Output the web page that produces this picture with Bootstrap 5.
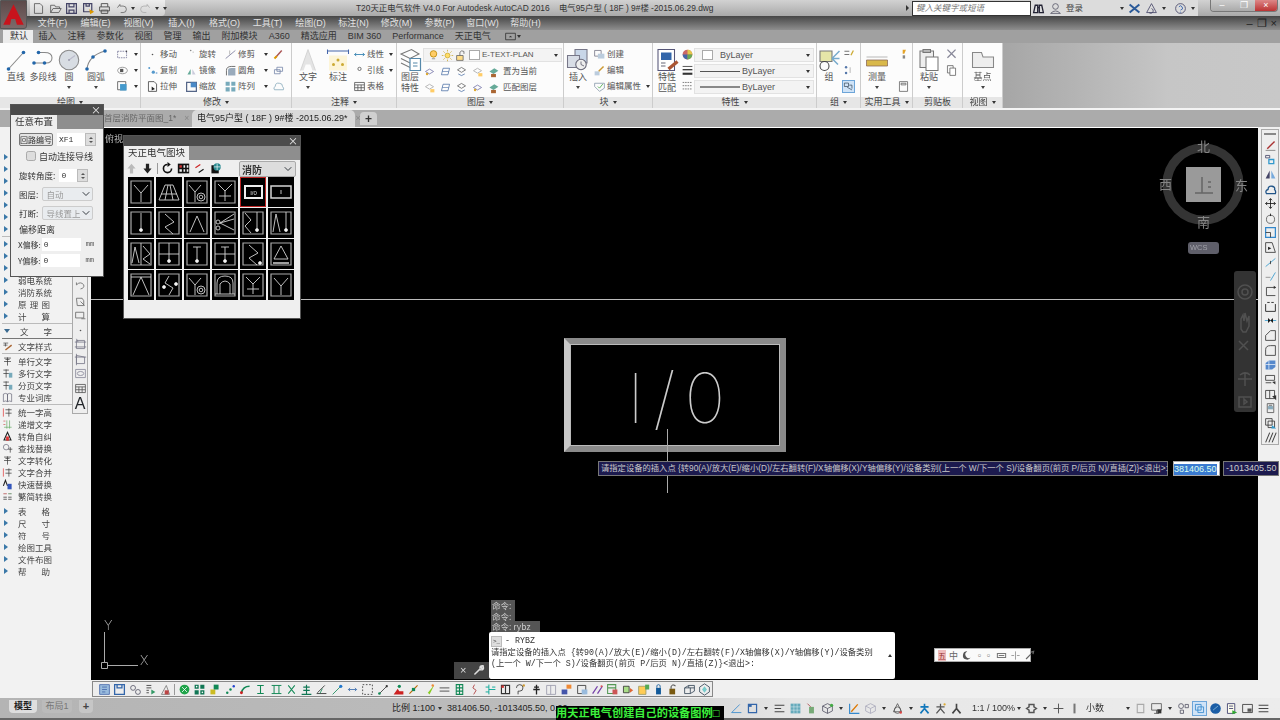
<!DOCTYPE html>
<html lang="zh-CN">
<head>
<meta charset="UTF-8" />
<title>T20天正电气软件 V4.0</title>
<link href="https://cdn.jsdelivr.net/npm/bootstrap@5.3.2/dist/css/bootstrap.min.css" rel="stylesheet"/>
<style>
  html,body{margin:0;height:720px;width:1280px;overflow:hidden}
  body{position:relative;background:#f0f0f0;font-family:"Liberation Sans","Noto Sans CJK SC",sans-serif;font-size:9px;line-height:1;color:#444}
  #app{position:relative;width:1280px;height:720px;filter:blur(.35px);overflow:hidden}
  svg.ic{width:13px;height:13px;flex:none;fill:none;stroke-width:1}
  svg.lg{width:24px;height:24px;flex:none;fill:none;stroke-width:.7}
  .caret-dn{width:0;height:0;border-left:2.5px solid transparent;border-right:2.5px solid transparent;border-top:3px solid #333;flex:none;display:inline-block}

  .title-row{height:16px;background:linear-gradient(#d2d2d2,#a9a9a9)}
  .qat{margin-left:30px;width:135px;height:16px;background:linear-gradient(#eee,#cfcfcf);border-radius:0 0 4px 0;padding-left:2px;gap:3.5px;flex:none}
  .title-txt{margin-left:191px;width:360px;font-size:8.4px;color:#333;white-space:pre;flex:none}
  .tri-r{margin-left:190px;width:0;height:0;flex:none;border-top:3px solid transparent;border-bottom:3px solid transparent;border-left:3px solid #333}
  .search-box{margin-left:3px;width:119px;height:15px;background:#fff;border:1px solid #333;font-style:italic;color:#777;padding-left:3px;font-size:8.5px;flex:none}
  .info-box{width:167px;height:16px;background:#dcdcdc;padding-left:1px;gap:4px;flex:none}
  .login-txt{width:50px;font-size:8.5px}
  .ms-help{margin-left:4px}
  .win-btns{margin-left:12px;height:12px;align-self:flex-start;width:68px;border-radius:0 0 4px 4px;overflow:hidden;border:1px solid #777;border-top:0;flex:none}
  .win-btn{flex:1;background:linear-gradient(#ccc,#aaa);color:#fff;font-size:9px}
  .win-close{background:linear-gradient(#d88,#b33)}

  .menu-row{height:14px;background:linear-gradient(#464646,#8e8e8e);padding-left:27px;color:#e2e2e2}
  .menu-item{width:43px;text-align:center;padding-left:8px;white-space:nowrap}
  .mdi-ctl{margin-left:auto;padding-right:3px;gap:4px;color:#222;font-size:11px}

  .tab-row{height:13px;background:#a0a0a0;padding-left:3px;color:#333}
  .rtab{padding:0 5.5px;height:13px;white-space:nowrap}
  .rtab-on{background:#ececec;padding:0 5px 0 7px}

  .ribbon{height:67px;background:#fff;border-bottom:2px solid #f4f4f4}
  .rp{border-right:1px solid #ccc;background:#fcfcfc}
  .rp-body{height:54px;padding-top:5px}
  .rp-foot{height:11px;background:#e6e6e6;color:#444;gap:4px}
  .w-draw{width:141px}.w-mod{width:151px}.w-ann{width:105px}.w-lay{width:167px}.w-blk{width:89px}.w-pro{width:164px}.w-grp{width:44px}.w-utl{width:52px}.w-clp{width:50px}.w-viw{width:40px}
  .rp-rest{flex:1;background:linear-gradient(90deg,#a6a6a6,#c6c6c6 60%,#c8c8c8)}
  .big{width:26px;height:49px;flex:none;text-align:center;color:#555}
  .big .lbl{white-space:nowrap;line-height:11px}
  .big .caret-dn{margin-top:3px;border-top-color:#444}
  .b24{width:24px}.b28{width:28px}.b30{width:30px}.b32{width:32px}
  .col3{gap:3px}
  .sm{height:13px;gap:1px;white-space:nowrap;color:#555;font-size:8.5px}
  .sm-lay{gap:3px}
  .pad-a{padding-left:5px}.pad-b{padding-left:8px}.pad-c{padding-left:4px}.pad-e{padding-left:1px}.pad-f{padding-left:3px}
  .combo{width:139px;height:14px;background:#f3f3f3;border:1px solid #e2e2e2;font-size:9px;padding:0 3px;gap:1px;color:#555}
  .combo-lay{font-size:8px}
  .combo-w{width:120px;padding-left:5px;margin-bottom:2px}
  .swatch{width:11px;height:10px;background:#fff;border:1px solid #aaa;margin:0 6px 0 2px;flex:none}
  .swatch-lay{margin:0 1px 0 0}
  .sw-line{width:40px;border-top:1px solid #555;margin-right:1px}
  .sw-thick{border-top-width:2px;border-top-color:#888}
  .on-blue{background:#cfe3f7;border:1px solid #6da5d8}

  .doc-row{height:17px;background:#ababab;color:#444;padding-left:104px}
  .dtab{height:17px;white-space:nowrap;font-size:9px}
  .dtab-1{width:88px;font-size:8.5px;color:#666}
  .dtab-on{width:163px;background:#d9d9d9;border-radius:5px 5px 0 0;padding-left:5px;color:#222}
  .dtab-x{color:#888;margin-left:8px}
  .dtab-plus{width:17px;height:13px;margin-left:5px;background:#d0d0d0;border-radius:4px 4px 0 0;color:#333;font-weight:700;font-size:12px}

  .main-row{height:571px}
  .side{width:91px;background:#f2f2f2}
  .side-list{width:72px;padding-top:24px;font-family:"Noto Sans CJK SC",sans-serif}
  .li-row{height:12px;padding-left:4px;gap:5px;color:#444;white-space:nowrap}
  .li-tri{width:0;height:0;flex:none;border-top:3.5px solid transparent;border-bottom:3.5px solid transparent;border-left:4px solid #3a78a8}
  .li-tri-dn{border-left:3.5px solid transparent;border-right:3.5px solid transparent;border-top:4px solid #3a6a90;border-bottom:0}
  .li-txt{width:32px;margin-left:5px;justify-content:space-between;font-size:8.5px}
  .li-icon{gap:0;padding-left:2px}
  .li-icon .ic{width:11px;height:11px}
  .li-sep{border-top:1px solid #bbb;margin:1px 0 1px 2px}
  .li-sep-dark{border-top:1px solid #777}
  .mt-gap{margin-top:1px}
  .mb-gap{margin-bottom:3px}
  .vbar{width:16px;height:287px;background:#eee;border:1px solid #aaa;border-top:0;gap:1.5px;padding-bottom:1px;color:#333}
  .center-col{width:1167px}
  .cad{height:553px;background:#000;border-top:1px solid #fff}
  .tb-row{height:18px;padding:1px 0 0 1px}
  .tb-bottom{width:621px;height:16px;background:#ededed;border:1px solid #888;padding-left:5px;gap:2.3px}
  .tb-bottom .ic{width:13px;height:13px}
  .right-strip{width:22px;padding:2px 1px 0 3px}
  .rbar{width:18px;height:316px;background:#eee;border:1px solid #aaa;gap:1.65px;padding-top:3px}
  .grip-h{width:12px;height:3px;border-top:1px solid #888;border-bottom:1px solid #888;margin-bottom:2px}

  .status{height:22px;background:linear-gradient(90deg,#b4b4b4,#bcbcbc 40%,#e6e6e6 62%,#ececec);border-bottom:2px solid #666;position:relative}
  .mtab{height:13px;align-self:flex-start;border-radius:0 0 4px 4px;margin-top:2px;white-space:nowrap;justify-content:center}
  .mtab-a{margin-left:9px;width:28px;font-weight:700;color:#222;background:#dedede}
  .mtab-b{margin-left:5px;width:30px;color:#777;background:#bbb}
  .mtab-c{margin-left:7px;width:14px;font-weight:700;font-size:11px;background:#c6c6c6}
  .st-scale{margin-left:299px;width:55px;gap:3px;color:#222}
  .st-coord{color:#222;width:283px;white-space:nowrap}
  .st-icons{gap:3px}
  .st-icons .caret-dn{margin:0 2px}
  .st-zoom{color:#333;white-space:nowrap;margin:0 2px 0 9px}
  .ms-s{margin-left:4px}
  .st-dec{width:40px;margin-left:5px;color:#333}
  .st-hl{background:#cfe3f7;outline:1px solid #6da5d8}

  /* over the drawing area and the page */
  .float{position:absolute}
  .pal{background:#efefef;border:1px solid #555;color:#333;font-family:"Noto Sans CJK SC",sans-serif}
  .pal-1{left:10px;top:104px;width:94px;height:173px}
  .pal-2{left:123px;top:135px;width:178px;height:184px}
  .pal-top{height:10px;background:#4c4c4c;color:#eee;font-size:10px;padding-right:2px}
  .pal-tabs{height:14px;background:#8e8e8e}
  .pal-tab{height:14px;background:#eee;padding:0 4px;font-size:9.5px;color:#333}
  .pal-1 .pal-body{padding:4px 0 0 8px}
  .p-btn{width:34px;height:13px;padding:0;font-size:8px;border:1px solid #777;background:#e4e4e4;color:#333;border-radius:2px;line-height:11px;white-space:nowrap}
  .p-inp{height:13px;padding:0 2px;font-size:8px;border:0;border-radius:0;background:#fff;color:#333;font-family:"Liberation Mono",monospace;min-height:0}
  .p-spin{width:11px;height:13px;background:#ddd;border:1px solid #bbb;gap:2px}
  .p-up{width:0;height:0;border-left:2px solid transparent;border-right:2px solid transparent;border-bottom:2.5px solid #555}
  .p-dn{width:0;height:0;border-left:2px solid transparent;border-right:2px solid transparent;border-top:2.5px solid #555}
  .w-28{width:28px}.w-18{width:18px}.w-39{width:39px}
  .p-row{gap:4px;font-size:8.5px;white-space:nowrap}
  .p-row-cb{margin:5px 0 8px 7px;gap:3px;font-size:9px}
  .p-cb{width:10px;height:10px;margin:0;border-radius:0;background-color:#ddd;border-color:#aaa}
  .p-sel{width:51px;height:14px;min-height:0;padding:0 3px;font-size:8.5px;color:#999;background-color:#e6e6e6;background-size:8px 8px;background-position:right 2px center;border:1px solid #ccc;border-radius:2px}
  .p-sp{margin-bottom:5px}
  .p-off{margin-top:4px;font-size:9px;margin-bottom:4px}
  .p-xy{gap:1px;font-size:8px;margin-bottom:3px;margin-left:-1px;white-space:nowrap}
  .p-mm{margin-left:4px;font-family:"Liberation Mono",monospace;font-size:7px;color:#555}
  .p-bar{height:17px;padding:0 4px 0 1px;gap:3px}
  .p-bar-sep{width:1px;height:11px;background:#999}
  .p-sel2{margin-left:auto;flex:none;width:57px;height:16px;min-height:0;padding:0 2px;font-size:10px;font-weight:700;color:#333;background-color:#ddd;background-size:8px 8px;background-position:right 3px center;border:1px solid #aaa;border-radius:2px;font-family:"Noto Sans CJK SC",sans-serif}
  .grid-blocks{display:grid;grid-template-columns:repeat(6,26px);column-gap:2px;row-gap:1px;padding-left:4px}
  .blk{width:26px;height:30px;background:#000;display:block}
  .blk svg{display:block;width:26px;height:30px;fill:none;stroke:#d4d4d4;stroke-width:.9}
  .blk-on{outline:1.5px solid #b22;outline-offset:-1px}

  .cad-rule-h{left:91px;top:299px;width:1167px;height:1px;background:#bbb}
  .cad-rule-v{left:667px;top:429px;width:1px;height:64px;background:#aaa}
  .vp-txt{left:105px;top:134px;color:#bbb;white-space:nowrap;font-family:"Noto Sans CJK SC",sans-serif}
  .io-block{left:564px;top:338px;width:222px;height:114px;border:6px solid #8a8a8a;border-left-color:#c8c8c8;background:#000;box-shadow:inset 0 0 0 1px #bbb}
  .io-txt{left:627px;top:358px;font-family:Inter,"Liberation Sans",sans-serif;font-weight:100;font-size:69px;line-height:80px;color:#ccc;letter-spacing:9px;white-space:nowrap}

  .tip{left:598px;top:461px;width:570px;height:15px;background:#1c1a4e;border:1px solid #777;color:#c8c8c8;font-size:8.3px;line-height:13px;padding-left:2px;white-space:nowrap}
  .tip-a{left:1173px;top:461px;width:47px;height:15px;background:#fff;border:1px solid #aaa;padding:2px 0 0 0}
  .tip-a span{background:#3a7ad0;color:#dfe;display:inline-block;font-size:9px;line-height:11px}
  .tip-b{left:1223px;top:461px;width:56px;height:15px;background:#1c1a4e;border:1px solid #777;color:#ccc;font-size:9px;line-height:13px;padding-left:2px;white-space:nowrap}

  .cube-ring{left:1162px;top:143px}
  .cube-face{left:1186px;top:167px;width:35px;height:35px;background:#9a9a9a}
  .cube-lbl{color:#858585;font-size:13px;font-family:"Noto Sans CJK SC",sans-serif}
  .l-n{left:1197px;top:139px}.l-s{left:1197px;top:215px}.l-w{left:1159px;top:177px}.l-e{left:1235px;top:178px}
  .wcs{left:1188px;top:242px;width:31px;height:12px;background:#5f5f6a;border-radius:3px;color:#a0a0a8;font-size:7.5px;padding-left:2px;line-height:12px}
  .navb{left:1234px;top:271px;width:22px;height:141px;background:#333;border-radius:3px}

  .ucs{left:100px;top:627px}
  .ucs-lbl{font-family:Inter,"Liberation Sans",sans-serif;font-weight:200;font-size:13px;color:#bbb}
  .ucs-y{left:104px;top:619px}
  .ucs-x{left:140px;top:654px}

  .hist{left:491px;height:11px;background:#555;color:#ccc;font-size:8.5px;line-height:11px;padding:0 1px;white-space:nowrap;font-family:"Noto Sans CJK SC",sans-serif}
  .hist-1{top:600px;width:24px}.hist-2{top:611px;width:24px}.hist-3{top:621px;width:49px}
  .cmd{left:489px;top:632px;width:406px;height:47px;background:#fff;border-radius:2px;color:#333;font-family:"Liberation Mono","Noto Sans CJK SC",monospace;font-size:8.3px;padding:3px 2px;white-space:nowrap}
  .cmd-1{gap:3px;height:13px}
  .cmd-ic{width:11px;height:11px;background:#ddd;border:1px solid #bbb;font-size:6px;line-height:9px;color:#333}
  .cmd-l{line-height:10.500px}
  .cmd-tri{left:888px;top:654px;width:0;height:0;border-left:2.5px solid transparent;border-right:2.5px solid transparent;border-bottom:3px solid #333}
  .cmd-grip{left:454px;top:662px;width:35px;height:17px;background:#444;color:#ddd;font-size:11px;padding-left:6px;gap:6px}
  .ime{left:934px;top:648px;width:97px;height:14px;background:#fafafa;border:1px solid #aaa;gap:3px;padding-left:3px;color:#666;font-size:9px;font-family:"Noto Sans CJK SC",sans-serif}
  .ime svg.ic{width:11px;height:11px}
  .ime-a{width:11px;height:11px;background:#eebbbb;color:#933;font-size:8px;line-height:11px;text-align:center}

  .subt{left:556px;top:706px;width:168px;height:14px;background:#000;color:#3cf03c;font-family:"Liberation Serif","Noto Sans CJK SC",serif;font-size:11.2px;font-weight:700;line-height:14px;white-space:nowrap}
  .app-btn{left:0;top:0;width:27px;height:29px;background:linear-gradient(#5c4a4a,#7c6a6a);border:1px solid #555;border-radius:0 0 3px 0}
</style>
</head>
<body>
<div id="app" class="d-flex flex-column">

  <div class="title-row d-flex align-items-center">
    <div class="qat d-flex align-items-center">
      <svg class="ic" data-i="doc"></svg><svg class="ic" data-i="open"></svg><svg class="ic" data-i="save"></svg><svg class="ic" data-i="saveas"></svg><svg class="ic" data-i="print"></svg><svg class="ic" data-i="undo"></svg><span class="caret-dn"></span><svg class="ic" data-i="redo"></svg><span class="caret-dn"></span><span class="caret-dn"></span>
    </div>
    <div class="title-txt">T20天正电气软件 V4.0 For Autodesk AutoCAD 2016    电气95户型 ( 18F ) 9#楼 -2015.06.29.dwg</div>
    <div class="tri-r"></div>
    <div class="search-box d-flex align-items-center">键入关键字或短语</div>
    <div class="info-box d-flex align-items-center">
      <svg class="ic" data-i="bino"></svg><svg class="ic" data-i="user"></svg>
      <span class="login-txt">登录</span><span class="caret-dn"></span>
      <svg class="ic" data-i="xchg"></svg><svg class="ic" data-i="a360"></svg><span class="caret-dn"></span>
      <svg class="ic ms-help" data-i="help"></svg><span class="caret-dn"></span>
    </div>
    <div class="win-btns d-flex">
      <div class="win-btn d-flex align-items-center justify-content-center">–</div>
      <div class="win-btn d-flex align-items-center justify-content-center">❐</div>
      <div class="win-btn win-close d-flex align-items-center justify-content-center">×</div>
    </div>
  </div>

  <div class="menu-row d-flex align-items-center">
    <div class="menu-item">文件(F)</div><div class="menu-item">编辑(E)</div><div class="menu-item">视图(V)</div><div class="menu-item">插入(I)</div><div class="menu-item">格式(O)</div><div class="menu-item">工具(T)</div><div class="menu-item">绘图(D)</div><div class="menu-item">标注(N)</div><div class="menu-item">修改(M)</div><div class="menu-item">参数(P)</div><div class="menu-item">窗口(W)</div><div class="menu-item">帮助(H)</div>
    <div class="mdi-ctl d-flex align-items-center"><span>–</span><span>❐</span><span>×</span></div>
  </div>

  <div class="tab-row d-flex align-items-center">
    <div class="rtab rtab-on d-flex align-items-center">默认</div><div class="rtab d-flex align-items-center">插入</div><div class="rtab d-flex align-items-center">注释</div><div class="rtab d-flex align-items-center">参数化</div><div class="rtab d-flex align-items-center">视图</div><div class="rtab d-flex align-items-center">管理</div><div class="rtab d-flex align-items-center">输出</div><div class="rtab d-flex align-items-center">附加模块</div><div class="rtab d-flex align-items-center">A360</div><div class="rtab d-flex align-items-center">精选应用</div><div class="rtab d-flex align-items-center">BIM 360</div><div class="rtab d-flex align-items-center">Performance</div><div class="rtab d-flex align-items-center">天正电气</div>
    <svg class="ic ms-2" data-i="mini"></svg><span class="caret-dn"></span>
  </div>

  <div class="ribbon d-flex">
    <div class="rp w-draw">
      <div class="rp-body d-flex pad-f">
        <div class="big d-flex flex-column align-items-center"><svg class="lg" data-i="line"></svg><span class="lbl">直线</span></div>
        <div class="big b28 d-flex flex-column align-items-center"><svg class="lg" data-i="pline"></svg><span class="lbl">多段线</span></div>
        <div class="big b24 d-flex flex-column align-items-center"><svg class="lg" data-i="circ"></svg><span class="lbl">圆</span><span class="caret-dn"></span></div>
        <div class="big b30 d-flex flex-column align-items-center"><svg class="lg" data-i="arc"></svg><span class="lbl">圆弧</span><span class="caret-dn"></span></div>
        <div class="col3 d-flex flex-column pad-a">
          <div class="sm d-flex align-items-center"><svg class="ic" data-i="drect"></svg><span class="caret-dn ms-1"></span></div>
          <div class="sm d-flex align-items-center"><svg class="ic" data-i="hatch"></svg><span class="caret-dn ms-1"></span></div>
          <div class="sm d-flex align-items-center"><svg class="ic" data-i="region"></svg><span class="caret-dn ms-1"></span></div>
        </div>
      </div>
      <div class="rp-foot d-flex align-items-center justify-content-center">绘图<span class="caret-dn"></span></div>
    </div>
    <div class="rp w-mod">
      <div class="rp-body d-flex pad-a">
        <div class="col3 d-flex flex-column">
          <div class="sm d-flex align-items-center"><svg class="ic" data-i="move"></svg>移动</div>
          <div class="sm d-flex align-items-center"><svg class="ic" data-i="copy"></svg>复制</div>
          <div class="sm d-flex align-items-center"><svg class="ic" data-i="stretch"></svg>拉伸</div>
        </div>
        <div class="col3 d-flex flex-column pad-b">
          <div class="sm d-flex align-items-center"><svg class="ic" data-i="rotate"></svg>旋转</div>
          <div class="sm d-flex align-items-center"><svg class="ic" data-i="mirror"></svg>镜像</div>
          <div class="sm d-flex align-items-center"><svg class="ic" data-i="scale"></svg>缩放</div>
        </div>
        <div class="col3 d-flex flex-column pad-b">
          <div class="sm d-flex align-items-center"><svg class="ic" data-i="trim"></svg>修剪<span class="caret-dn ms-2"></span></div>
          <div class="sm d-flex align-items-center"><svg class="ic" data-i="fillet"></svg>圆角<span class="caret-dn ms-2"></span></div>
          <div class="sm d-flex align-items-center"><svg class="ic" data-i="array"></svg>阵列<span class="caret-dn ms-2"></span></div>
        </div>
        <div class="col3 d-flex flex-column pad-c">
          <div class="sm d-flex align-items-center"><svg class="ic" data-i="brush"></svg></div>
          <div class="sm d-flex align-items-center"><svg class="ic" data-i="chain"></svg></div>
          <div class="sm d-flex align-items-center"><svg class="ic" data-i="cloud"></svg></div>
        </div>
      </div>
      <div class="rp-foot d-flex align-items-center justify-content-center">修改<span class="caret-dn"></span></div>
    </div>
    <div class="rp w-ann">
      <div class="rp-body d-flex">
        <div class="big b32 d-flex flex-column align-items-center"><svg class="lg" data-i="atext"></svg><span class="lbl">文字</span><span class="caret-dn"></span></div>
        <div class="big b28 d-flex flex-column align-items-center"><svg class="lg" data-i="dim"></svg><span class="lbl">标注</span></div>
        <div class="col3 d-flex flex-column pad-e">
          <div class="sm d-flex align-items-center"><svg class="ic" data-i="lin"></svg>线性<span class="caret-dn ms-1"></span></div>
          <div class="sm d-flex align-items-center"><svg class="ic" data-i="lead"></svg>引线<span class="caret-dn ms-1"></span></div>
          <div class="sm d-flex align-items-center"><svg class="ic" data-i="table"></svg>表格</div>
        </div>
      </div>
      <div class="rp-foot d-flex align-items-center justify-content-center">注释<span class="caret-dn"></span></div>
    </div>
    <div class="rp w-lay">
      <div class="rp-body d-flex">
        <div class="big d-flex flex-column align-items-center"><svg class="lg" data-i="layers"></svg><span class="lbl">图层<br>特性</span></div>
        <div class="d-flex flex-column col3">
          <div class="combo combo-lay d-flex align-items-center"><svg class="ic" data-i="bulb"></svg><svg class="ic" data-i="sun"></svg><svg class="ic" data-i="lock"></svg><span class="swatch swatch-lay"></span>E-TEXT-PLAN<span class="caret-dn ms-auto"></span></div>
          <div class="sm sm-lay d-flex align-items-center"><svg class="ic" data-i="ly1"></svg><svg class="ic" data-i="ly2"></svg><svg class="ic" data-i="ly3"></svg><svg class="ic" data-i="ly4"></svg><svg class="ic" data-i="ly5"></svg>置为当前</div>
          <div class="sm sm-lay d-flex align-items-center"><svg class="ic" data-i="ly4"></svg><svg class="ic" data-i="ly2"></svg><svg class="ic" data-i="ly3"></svg><svg class="ic" data-i="ly1"></svg><svg class="ic" data-i="ly5"></svg>匹配图层</div>
        </div>
      </div>
      <div class="rp-foot d-flex align-items-center justify-content-center">图层<span class="caret-dn"></span></div>
    </div>
    <div class="rp w-blk">
      <div class="rp-body d-flex">
        <div class="big b28 d-flex flex-column align-items-center"><svg class="lg" data-i="insert"></svg><span class="lbl">插入</span><span class="caret-dn"></span></div>
        <div class="col3 d-flex flex-column pad-e">
          <div class="sm d-flex align-items-center"><svg class="ic" data-i="bcreate"></svg>创建</div>
          <div class="sm d-flex align-items-center"><svg class="ic" data-i="bedit"></svg>编辑</div>
          <div class="sm d-flex align-items-center"><svg class="ic" data-i="battr"></svg>编辑属性<span class="caret-dn ms-1"></span></div>
        </div>
      </div>
      <div class="rp-foot d-flex align-items-center justify-content-center">块<span class="caret-dn"></span></div>
    </div>
    <div class="rp w-pro">
      <div class="rp-body d-flex">
        <div class="big b28 d-flex flex-column align-items-center"><svg class="lg" data-i="match"></svg><span class="lbl">特性<br>匹配</span></div>
        <div class="col3 d-flex flex-column">
          <div class="sm d-flex align-items-center"><svg class="ic" data-i="wheel"></svg></div>
          <div class="sm d-flex align-items-center"><svg class="ic" data-i="lw"></svg></div>
          <div class="sm d-flex align-items-center"><svg class="ic" data-i="ltype"></svg></div>
        </div>
        <div class="d-flex flex-column">
          <div class="combo combo-w d-flex align-items-center"><span class="swatch"></span>ByLayer<span class="caret-dn ms-auto"></span></div>
          <div class="combo combo-w d-flex align-items-center"><span class="sw-line"></span>ByLayer<span class="caret-dn ms-auto"></span></div>
          <div class="combo combo-w d-flex align-items-center"><span class="sw-line sw-thick"></span>ByLayer<span class="caret-dn ms-auto"></span></div>
        </div>
      </div>
      <div class="rp-foot d-flex align-items-center justify-content-center">特性<span class="caret-dn"></span></div>
    </div>
    <div class="rp w-grp">
      <div class="rp-body d-flex">
        <div class="big b24 d-flex flex-column align-items-center"><svg class="lg" data-i="group"></svg><span class="lbl">组</span></div>
        <div class="col3 d-flex flex-column pad-e">
          <div class="sm d-flex align-items-center"><svg class="ic" data-i="g1"></svg></div>
          <div class="sm d-flex align-items-center"><svg class="ic" data-i="g2"></svg></div>
          <div class="sm d-flex align-items-center"><svg class="ic on-blue" data-i="g3"></svg></div>
        </div>
      </div>
      <div class="rp-foot d-flex align-items-center justify-content-center">组<span class="caret-dn"></span></div>
    </div>
    <div class="rp w-utl">
      <div class="rp-body d-flex">
        <div class="big b32 d-flex flex-column align-items-center"><svg class="lg" data-i="ruler"></svg><span class="lbl">测量</span><span class="caret-dn"></span></div>
        <div class="col3 d-flex flex-column pad-c">
          <div class="sm d-flex align-items-center"><svg class="ic" data-i="u1"></svg></div>
          <div class="sm d-flex align-items-center"></div>
          <div class="sm d-flex align-items-center"><svg class="ic" data-i="calc"></svg></div>
        </div>
      </div>
      <div class="rp-foot d-flex align-items-center justify-content-center">实用工具<span class="caret-dn"></span></div>
    </div>
    <div class="rp w-clp">
      <div class="rp-body d-flex">
        <div class="big b32 d-flex flex-column align-items-center"><svg class="lg" data-i="paste"></svg><span class="lbl">粘贴</span><span class="caret-dn"></span></div>
        <div class="col3 d-flex flex-column">
          <div class="sm d-flex align-items-center"><svg class="ic" data-i="cut"></svg></div>
          <div class="sm d-flex align-items-center"><svg class="ic" data-i="cpy"></svg></div>
        </div>
      </div>
      <div class="rp-foot d-flex align-items-center justify-content-center">剪贴板</div>
    </div>
    <div class="rp w-viw">
      <div class="rp-body d-flex justify-content-center">
        <div class="big d-flex flex-column align-items-center"><svg class="lg" data-i="base"></svg><span class="lbl">基点</span><span class="caret-dn"></span></div>
      </div>
      <div class="rp-foot d-flex align-items-center justify-content-center">视图<span class="caret-dn"></span></div>
    </div>
    <div class="rp-rest"></div>
  </div>

  <div class="doc-row d-flex align-items-center">
    <div class="dtab dtab-1 d-flex align-items-center">首层消防平面图_1*<span class="dtab-x">×</span></div>
    <div class="dtab dtab-on d-flex align-items-center">电气95户型 ( 18F ) 9#楼 -2015.06.29*<span class="dtab-x">×</span></div>
    <div class="dtab-plus d-flex align-items-center justify-content-center">+</div>
  </div>

  <div class="main-row d-flex">
    <div class="side d-flex">
      <div class="side-list">
        <div class="li-row d-flex align-items-center"><span class="li-tri"></span></div>
        <div class="li-row d-flex align-items-center"><span class="li-tri"></span></div>
        <div class="li-row d-flex align-items-center"><span class="li-tri"></span></div>
        <div class="li-row d-flex align-items-center"><span class="li-tri"></span></div>
        <div class="li-row d-flex align-items-center"><span class="li-tri"></span></div>
        <div class="li-row d-flex align-items-center"><span class="li-tri"></span></div>
        <div class="li-row d-flex align-items-center"><span class="li-tri"></span></div>
        <div class="li-sep"></div>
        <div class="li-row d-flex align-items-center"><span class="li-tri"></span></div>
        <div class="li-row d-flex align-items-center"><span class="li-tri"></span></div>
        <div class="li-row d-flex align-items-center"><span class="li-tri"></span></div>
        <div class="li-row d-flex align-items-center"><span class="li-tri"></span><span class="li-txt d-flex">弱电系统</span></div>
        <div class="li-row d-flex align-items-center"><span class="li-tri"></span><span class="li-txt d-flex">消防系统</span></div>
        <div class="li-row d-flex align-items-center"><span class="li-tri"></span><span class="li-txt d-flex"><span>原</span><span>理</span><span>图</span></span></div>
        <div class="li-row d-flex align-items-center"><span class="li-tri"></span><span class="li-txt d-flex"><span>计</span><span>算</span></span></div>
        <div class="li-sep"></div>
        <div class="li-row d-flex align-items-center"><span class="li-tri li-tri-dn"></span><span class="li-txt d-flex"><span>文</span><span>字</span></span></div>
        <div class="li-sep li-sep-dark"></div>
        <div class="li-row li-icon d-flex align-items-center mt-gap"><svg class="ic" data-i="s1"></svg><span class="li-txt d-flex">文字样式</span></div>
        <div class="li-sep"></div>
        <div class="li-row li-icon d-flex align-items-center mt-gap"><svg class="ic" data-i="s2"></svg><span class="li-txt d-flex">单行文字</span></div>
        <div class="li-row li-icon d-flex align-items-center"><svg class="ic" data-i="s3"></svg><span class="li-txt d-flex">多行文字</span></div>
        <div class="li-row li-icon d-flex align-items-center"><svg class="ic" data-i="s3"></svg><span class="li-txt d-flex">分页文字</span></div>
        <div class="li-row li-icon d-flex align-items-center"><svg class="ic" data-i="s4"></svg><span class="li-txt d-flex">专业词库</span></div>
        <div class="li-sep"></div>
        <div class="li-row li-icon d-flex align-items-center"><svg class="ic" data-i="s5"></svg><span class="li-txt d-flex">统一字高</span></div>
        <div class="li-row li-icon d-flex align-items-center"><svg class="ic" data-i="s6"></svg><span class="li-txt d-flex">递增文字</span></div>
        <div class="li-row li-icon d-flex align-items-center"><svg class="ic" data-i="s7"></svg><span class="li-txt d-flex">转角自纠</span></div>
        <div class="li-row li-icon d-flex align-items-center"><svg class="ic" data-i="s8"></svg><span class="li-txt d-flex">查找替换</span></div>
        <div class="li-row li-icon d-flex align-items-center"><svg class="ic" data-i="s2"></svg><span class="li-txt d-flex">文字转化</span></div>
        <div class="li-row li-icon d-flex align-items-center"><svg class="ic" data-i="s5"></svg><span class="li-txt d-flex">文字合并</span></div>
        <div class="li-row li-icon d-flex align-items-center"><svg class="ic" data-i="s9"></svg><span class="li-txt d-flex">快速替换</span></div>
        <div class="li-row li-icon d-flex align-items-center mb-gap"><svg class="ic" data-i="s10"></svg><span class="li-txt d-flex">繁简转换</span></div>
        <div class="li-row d-flex align-items-center"><span class="li-tri"></span><span class="li-txt d-flex"><span>表</span><span>格</span></span></div>
        <div class="li-row d-flex align-items-center"><span class="li-tri"></span><span class="li-txt d-flex"><span>尺</span><span>寸</span></span></div>
        <div class="li-row d-flex align-items-center"><span class="li-tri"></span><span class="li-txt d-flex"><span>符</span><span>号</span></span></div>
        <div class="li-row d-flex align-items-center"><span class="li-tri"></span><span class="li-txt d-flex">绘图工具</span></div>
        <div class="li-row d-flex align-items-center"><span class="li-tri"></span><span class="li-txt d-flex">文件布图</span></div>
        <div class="li-row d-flex align-items-center"><span class="li-tri"></span><span class="li-txt d-flex"><span>帮</span><span>助</span></span></div>
      </div>
      <div class="vbar d-flex flex-column align-items-center justify-content-end">
        <svg class="ic" data-i="v1"></svg><svg class="ic" data-i="v2"></svg><svg class="ic" data-i="v3"></svg><svg class="ic" data-i="v4"></svg><svg class="ic" data-i="v5"></svg><svg class="ic" data-i="v6"></svg><svg class="ic" data-i="v7"></svg><svg class="ic" data-i="table"></svg>
        <span class="fs-6 fw-normal text-dark">A</span>
      </div>
    </div>
    <div class="center-col d-flex flex-column">
      <div class="cad"></div>
      <div class="tb-row"><div id="tbBottom" class="tb-bottom d-flex align-items-center"></div></div>
    </div>
    <div class="right-strip">
      <div id="rBar" class="rbar d-flex flex-column align-items-center"><div class="grip-h"></div></div>
    </div>
  </div>

  <div class="status d-flex align-items-center">
    <div class="mtab mtab-a d-flex align-items-center">模型</div>
    <div class="mtab mtab-b d-flex align-items-center">布局1</div>
    <div class="mtab mtab-c d-flex align-items-center">+</div>
    <div class="st-scale d-flex align-items-center">比例 1:100<span class="caret-dn"></span></div>
    <div class="st-coord">381406.50, -1013405.50, 0.00</div>
    <div id="stA" class="st-icons d-flex align-items-center"></div>
    <span class="st-zoom">1:1 / 100%</span><span class="caret-dn"></span>
    <div id="stB" class="st-icons d-flex align-items-center ms-s"></div>
    <span class="st-dec">小数</span><span class="caret-dn"></span>
    <div id="stC" class="st-icons d-flex align-items-center ms-s"></div>
  </div>

  <!-- drawing area overlays -->
  <div class="float cad-rule-h"></div>
  <div class="float vp-txt">俯视</div>
  <div class="float io-block"></div>
  <div class="float io-txt">I/0</div>
  <div class="float cad-rule-v"></div>

  <div class="float tip">请指定设备的插入点 {转90(A)/放大(E)/缩小(D)/左右翻转(F)/X轴偏移(X)/Y轴偏移(Y)/设备类别(上一个 W/下一个 S)/设备翻页(前页 P/后页 N)/直插(Z)}&lt;退出&gt;:</div>
  <div class="float tip-a"><span>381406.50</span></div>
  <div class="float tip-b">-1013405.50</div>

  <svg class="float cube-ring" width="82" height="82" viewBox="0 0 82 82" fill="none"><circle cx="41" cy="41" r="36" stroke="#343434" stroke-width="9"/></svg>
  <div class="float cube-face d-flex align-items-center justify-content-center"><svg width="24" height="24" viewBox="0 0 24 24" fill="none" stroke="#666" stroke-width="1.5"><path d="M3 20H21M10 4V20M16 9h3M16 14h3"/></svg></div>
  <div class="float cube-lbl l-n">北</div><div class="float cube-lbl l-s">南</div><div class="float cube-lbl l-w">西</div><div class="float cube-lbl l-e">东</div>
  <div class="float wcs">WCS</div>
  <div class="float navb d-flex flex-column align-items-center justify-content-start pt-2">
    <svg width="20" height="130" viewBox="0 0 20 130" fill="none" stroke="#505050" stroke-width="1.5"><circle cx="10" cy="13" r="7"/><circle cx="10" cy="13" r="3"/><path d="M6 50V40l2-4 1 6 1-8 2 8 2-5v10l-3 6H8zM4 62l9 9M13 62l-9 9M10 93v14M3 100h14M5 96c4-3 7-3 10 0M4 118h12v10H4zM9 120v5l3-2z"/></svg>
  </div>

  <svg class="float ucs" width="44" height="46" viewBox="0 0 44 46" fill="none" stroke="#aaa"><path d="M4.500 5V35M8 38.500H38M1.500 35.500h6v6h-6z"/></svg>
  <div class="float ucs-lbl ucs-y">Y</div>
  <div class="float ucs-lbl ucs-x">X</div>

  <div class="float hist hist-1">命令:</div>
  <div class="float hist hist-2">命令:</div>
  <div class="float hist hist-3">命令: rybz</div>
  <div class="float cmd">
    <div class="cmd-1 d-flex align-items-center"><span class="cmd-ic text-center">&gt;_</span>- RYBZ</div>
    <div class="cmd-l">请指定设备的插入点 {转90(A)/放大(E)/缩小(D)/左右翻转(F)/X轴偏移(X)/Y轴偏移(Y)/设备类别<br>(上一个 W/下一个 S)/设备翻页(前页 P/后页 N)/直插(Z)}&lt;退出&gt;:</div>
  </div>
  <div class="float cmd-tri"></div>
  <div class="float cmd-grip d-flex align-items-center"><span>×</span><svg class="ic" data-i="wrench"></svg></div>
  <div class="float ime d-flex align-items-center"><span class="ime-a">五</span><span>中</span><svg class="ic" data-i="moon"></svg><span>◦◦</span><svg class="ic" data-i="kbd"></svg><svg class="ic" data-i="cross"></svg><svg class="ic" data-i="wrench2"></svg></div>

  <!-- 任意布置 -->
  <div class="float pal pal-1">
    <div class="pal-top d-flex align-items-center justify-content-end">×</div>
    <div class="pal-tabs d-flex"><div class="pal-tab d-flex align-items-center">任意布置</div></div>
    <div class="pal-body">
      <div class="p-row d-flex align-items-center">
        <button class="p-btn btn" type="button">回路编号</button>
        <div class="d-flex"><input class="form-control p-inp w-28" value="XF1"><div class="p-spin d-flex flex-column align-items-center justify-content-center"><span class="p-up"></span><span class="p-dn"></span></div></div>
      </div>
      <div class="p-row-cb d-flex align-items-center"><input class="form-check-input p-cb" type="checkbox"><span>自动连接导线</span></div>
      <div class="p-row p-sp d-flex align-items-center ms-0">旋转角度:<div class="d-flex"><input class="form-control p-inp w-18" value="0"><div class="p-spin d-flex flex-column align-items-center justify-content-center"><span class="p-up"></span><span class="p-dn"></span></div></div></div>
      <div class="p-row p-sp d-flex align-items-center">图层:<select class="form-select p-sel" disabled><option>自动</option></select></div>
      <div class="p-row p-sp d-flex align-items-center">打断:<select class="form-select p-sel" disabled><option>导线置上</option></select></div>
      <div class="p-off">偏移距离</div>
      <div class="p-xy d-flex align-items-center">X偏移:<input class="form-control p-inp w-39" value="0"><span class="p-mm">mm</span></div>
      <div class="p-xy d-flex align-items-center">Y偏移:<input class="form-control p-inp w-39" value="0"><span class="p-mm">mm</span></div>
    </div>
  </div>

  <!-- 天正电气图块 -->
  <div class="float pal pal-2">
    <div class="pal-top d-flex align-items-center justify-content-end">×</div>
    <div class="pal-tabs d-flex"><div class="pal-tab d-flex align-items-center">天正电气图块</div></div>
    <div class="p-bar d-flex align-items-center">
      <svg class="ic" data-i="up"></svg><svg class="ic" data-i="down"></svg><span class="p-bar-sep"></span><svg class="ic" data-i="refresh"></svg><svg class="ic" data-i="gridr"></svg><svg class="ic" data-i="swap"></svg><svg class="ic" data-i="globe"></svg>
      <select class="form-select p-sel2"><option>消防</option></select>
    </div>
    <div id="blocks" class="grid-blocks"></div>
  </div>

  <div class="float app-btn d-flex align-items-center justify-content-center">
    <svg width="25" height="25" viewBox="0 0 22 22"><path d="M11 2L20 20H14L12.500 15H9L8 20H2z" fill="#c8141c"/></svg>
  </div>
  <div class="float subt">用天正电气创建自己的设备图例□</div>
</div>

<script>
  // stroke helper: colour + path
  const p = (c, d, w) => `<path d="${d}" stroke="${c}"${w ? ` stroke-width="${w}"` : ''}/>`;
  const f = (c, d) => `<path d="${d}" fill="${c}"/>`;
  const dot = (x, y, c, r) => `<circle cx="${x}" cy="${y}" r="${r || 1.2}" fill="${c || '#26a'}"/>`;
  const icons = {
    doc: p('#555', 'M3 2H10L13 5V14H3z'), open: p('#555', 'M2 13V4H7L8 6H13V8M2 13L5 8H15L12 13z'),
    save: p('#446', 'M2 2H14V14H2zM5 2V6H11V2M5 14V10H11V14', 1.5), saveas: p('#446', 'M2 2H12V12H2zM5 2V5H9V2', 1.5) + f('#d90', 'M9 9L15 12L10 15z'),
    print: p('#555', 'M4 6V2H12V6M2 6H14V11H2zM4 10H12V14H4z', 1.2), undo: p('#666', 'M3 7L6 3V5H10Q14 5 14 9T10 13H7'), redo: p('#aaa', 'M13 7L10 3V5H6Q2 5 2 9T6 13H9'),
    bino: p('#223', 'M2 13L4 4H7V13zM14 13L12 4H9V13zM7 7H9', 1.6), user: p('#556', 'M8 2A3 3 0 108 9A3 3 0 108 2M2 14Q8 8 14 14z'),
    xchg: p('#2a5a99', 'M2 3L14 13M14 3L2 13', 2.4), a360: p('#446', 'M8 2L2 13H14zM5 13A3 3 0 108 8'), help: '<circle cx="8" cy="8" r="6" stroke="#446"/>' + p('#25a', 'M6 6Q8 3 10 6T8 10M8 12V13'),
    mini: p('#333', 'M2 4H14V12H2z') + f('#333', 'M6 9L8 7L10 9z'),
    line: p('#888', 'M3 14L13 3') + dot(3, 14) + dot(13, 3),
    pline: p('#888', 'M2 10H10Q14 10 14 6.500T9 3H5') + dot(2, 10) + dot(9, 10) + dot(5, 3),
    circ: '<circle cx="8" cy="8" r="6.500" fill="#d8dde3" stroke="#888"/>' + p('#bbc', 'M8 8L12 5') + dot(8, 8, '#99a', .6),
    arc: p('#888', 'M2 14Q3 5 14 2') + dot(2, 14) + dot(6, 6) + dot(14, 2),
    drect: p('#779', 'M2 4H13V12H2z', 1).replace('/>', ' stroke-dasharray="2 1"/>') + dot(13, 4, '#333', .8),
    hatch: '<ellipse cx="8" cy="8" rx="6" ry="4" stroke="#888"/>' + f('#555', 'M5 6H9V10H5z'), region: p('#555', 'M2 2H12V12H2z') + f('#49c', 'M5 5H13V13H5z'),
    move: dot(8, 8, '#555', 1), copy: dot(4, 5, '#59c', 1.2) + dot(9, 10, '#59c', 2) + dot(13, 11, '#9bd', 1.2), stretch: p('#444', 'M3 2H10L13 5V14H3z') + f('#222', 'M7 8L11 11L7 13z'),
    rotate: dot(7, 3, '#888', 1) + dot(10, 5, '#aaa', .7), mirror: f('#6a9', 'M7 13V6L3 13z') + f('#ccd', 'M9 13V6L13 13z'), scale: p('#568', 'M2 3H14V14H2z', 1.5) + f('#4a8ac8', 'M7 3H14V9H7z'),
    trim: p('#779', 'M2 13L14 3') + p('#aaa', 'M7 3V8', 1), fillet: p('#555', 'M3 14V8Q3 3 9 3H14') + f('#9ab', 'M5 14V8Q5 5 9 5H14V14z'), array: f('#7ab', 'M2 2H7V7H2zM9 2H14V7H9zM2 9H7V14H2zM9 9H14V14H9z'),
    brush: p('#a55', 'M4 12L12 3', 1.8) + p('#d90', 'M3 13L6 10', 2.4), chain: p('#78a', 'M3 7H10V12H3zM6 4H13V9H6z', 1), cloud: p('#8ab', 'M3 12Q1 9 4 8Q4 3 9 4Q13 4 13 8Q15 10 14 12z'),
    atext: f('#e4e4e4', 'M8 1L13 15H11L9.500 11H6.500L5 15H3z') + p('#ccc', 'M8 1L13 15M8 1L3 15', .5),
    dim: p('#46a', 'M1 2H15M1 1V4M15 1V4') + f('#fdf5d8', 'M2 5H14V15H2z') + dot(5, 11, '#ca3', 1) + dot(8, 8, '#ca3', 1) + dot(11, 11, '#ca3', 1),
    lin: p('#27a', 'M2 8H14M4 6L2 8L4 10M12 6L14 8L12 10', 1), lead: '<circle cx="8" cy="6" r="2" stroke="#555"/>', table: p('#555', 'M2 3H14V13H2zM2 6H14M2 9.500H14M6 6V13M10 6V13', 1),
    layers: p('#777', 'M2 4L9 1L14 4L8 7zM2 7L8 10L14 7M2 10L8 13L14 10') + f('#fff', 'M8 7H15V15H8z') + p('#58a', 'M8 7H15V15H8zM10 10H13M10 12H13', .8),
    bulb: '<circle cx="8" cy="6" r="4" fill="#fc6" stroke="#b80"/>' + p('#888', 'M6 12H10'), sun: '<circle cx="8" cy="8" r="3" fill="#fd6" stroke="#ca3"/>' + p('#ca3', 'M8 1V3M8 13V15M1 8H3M13 8H15M3 3L4.500 4.500M13 3L11.500 4.500M3 13L4.500 11.500M13 13L11.500 11.500'), lock: f('#fd8', 'M2 8H10V14H2z') + p('#666', 'M2 8H10V14H2zM6 8V4Q8 1 11 3V6'),
    ly1: p('#77a', 'M3 8L8 5L13 8L8 11z') + dot(5, 11, '#da3', 1.5), ly2: p('#57a', 'M3 12L5 4H13L11 12z') + p('#57a', 'M4 8H12', .8), ly3: p('#666', 'M3 6L8 3L13 6L8 9z') + p('#57a', 'M4 11L8 13L12 11'), ly4: p('#aaa', 'M3 7L8 4L13 7L8 10z') + f('#fc6', 'M9 10H14V14H9z'), ly5: f('#6a9', 'M3 8L9 4L14 7L8 11z') + f('#a63', 'M5 11H11V15H5z'),
    insert: f('#c8d6e8', 'M6 1H14V10H6z') + p('#778', 'M6 1H14V10H6z') + f('#d8dde6', 'M1 5H9V13H1z') + p('#778', 'M1 5H9V13H1z') + '<circle cx="10" cy="11" r="3.500" fill="#eee" stroke="#667"/>' + p('#667', 'M10 9V11L12 12', .6),
    bcreate: p('#778', 'M2 3H10V10H2z') + f('#bcd', 'M6 7H14V13H6z'), bedit: f('#bcd', 'M2 9H8V14H2z') + p('#c93', 'M7 9L13 3', 1.8), battr: p('#89a', 'M2 4H14V10L8 14L2 8z') + p('#4a4', 'M6 8L8 10L12 5'),
    match: f('#fff', 'M2 1H13V15H2z') + p('#557', 'M2 1H13V15H2z') + f('#36a', 'M4 3H11V8H4z') + p('#667', 'M4 10H7M4 12H7') + p('#a53', 'M15 9L9 14', 2.2),
    wheel: '<circle cx="8" cy="8" r="6" fill="#c66"/>' + f('#e4c64a', 'M8 2A6 6 0 0 1 14 8H8z') + f('#46a', 'M2 8A6 6 0 0 0 8 14V8z') + f('#6a5', 'M8 14A6 6 0 0 0 14 8H8z'),
    lw: p('#333', 'M2 3H14', 1) + p('#333', 'M2 7H14', 1.6) + p('#333', 'M2 12H14', 2.6), ltype: p('#555', 'M2 3H14M2 7H14M2 11H14', .9).replace('/>', ' stroke-dasharray="2 1"/>'),
    group: f('#e6e6a8', 'M2 2H10V9H2z') + p('#777', 'M2 2H10V9H2z') + '<circle cx="5" cy="12" r="3" stroke="#444"/>' + p('#7ac', 'M10 7L15 2M10 7L15 7M10 7L14 11', 1),
    g1: p('#555', 'M3 4H9M3 8H9') + p('#ca3', 'M11 9L14 3', 1.6), g2: dot(5, 4, '#57a', 1.5) + dot(5, 11, '#57a', 1.5) + p('#aaa', 'M10 4V11'), g3: p('#345', 'M2 3H8V8H2zM6 9L13 13M9 6H13V11') ,
    ruler: p('#bbb', 'M1 6H15', .7) + f('#d9b84a', 'M1 8H15V12H1z') + p('#865', 'M1 8H15V12H1z', .5), u1: f('#e5a428', 'M7 2H11L9 7H7z') + f('#888', 'M7 9H10V13H7z'), calc: p('#666', 'M3 2H13V14H3zM5 4H11V6H5z'),
    paste: f('#eee', 'M2 2H11V13H2z') + p('#777', 'M2 2H11V13H2zM4 1H9V3H4z') + f('#fff', 'M6 6H14V15H6z') + p('#777', 'M6 6H14V15H6z'), cut: p('#889', 'M3 2L13 12M13 2L3 12', 1.6), cpy: p('#666', 'M3 2H10V11H3z') + f('#fff', 'M6 5H13V14H6z') + p('#666', 'M6 5H13V14H6z'),
    base: f('#eee', 'M1 3H7L8 6H15V13H1z') + p('#888', 'M1 3H7L8 6H15V13H1z'),
    s1: p('#444', 'M2 3H9M5 3V8M2 6H8', 1) + p('#a63', 'M5 13L14 6', 2), s2: p('#333', 'M3 3H13M8 2V14M3 8H13M5 5H11', 1), s3: p('#333', 'M2 3H10M6 2V14M2 8H10', 1) + f('#7ab', 'M10 7H15V14H10z'), s4: p('#667', 'M2 3Q5 1 8 3V14Q5 12 2 14zM8 3Q11 1 14 3V14Q11 12 8 14z', 1),
    s5: p('#d33', 'M2 2V14') + p('#333', 'M5 4H14M10 2V14M5 9H14', 1), s6: p('#c55', 'M2 3H5M2 8H5') + p('#6a6', 'M7 2V14M11 2V14M3 12H14', 1), s7: p('#222', 'M3 13L8 2L13 13z', 1.6) + f('#d33', 'M6 8H10V14H6z'), s8: '<circle cx="6" cy="6" r="4" stroke="#667"/>' + p('#333', 'M9 9H15M12 6V14', 1),
    s9: p('#222', 'M2 10L5 2L8 10', 1.6) + f('#35b', 'M8 7H14V15H8z'), s10: p('#a33', 'M2 4H7') + p('#363', 'M9 4H14') + p('#222', 'M2 9H7M2 12H7M9 9H14M9 12H14', 1),
    v1: p('#666', 'M12 6Q8 1 3 6M3 6V3M12 6Q13 10 8 11'), v2: p('#666', 'M3 4H10L12 7V13H4zM8 8L13 13'), v3: p('#666', 'M2 4H12V11H2zM9 12L14 12'), v4: dot(8, 8, '#555', 1), v5: p('#778', 'M3 3H13V13H3zM1 5H15M1 11H15M3 1L5 5'), v6: p('#778', 'M3 3L13 5V13H3zM1 5H15M3 1L3 15'), v7: p('#889', 'M2 3H14V13H2z') + '<ellipse cx="8" cy="8" rx="4" ry="2.500" stroke="#889"/>',
    wrench: p('#ddd', 'M3 13L10 6M10 6Q9 2 13 2L11 5L13 6L14 4Q15 8 10 7', 1.8), wrench2: p('#666', 'M3 13L10 6M10 3L14 2L13 6', 1.8), moon: f('#555', 'M9 2A6 6 0 1 0 14 11A5 5 0 0 1 9 2'), kbd: p('#777', 'M2 5H14V11H2zM4 8H12', 1.5), cross: p('#777', 'M8 2V14M2 8H6M10 8H14'),
    up: f('#bbb', 'M8 2L13 8H10V14H6V8H3z'), down: f('#222', 'M6 2H10V8H13L8 14L3 8H6z'), refresh: p('#111', 'M13 8A5 5 0 1 1 8 3', 2) + f('#111', 'M8 0L12 3L8 6z'), gridr: f('#111', 'M1 2H15V14H1z') + f('#c33', 'M3 4H6V7H3z') + f('#eee', 'M8 4H10V7H8zM12 4H14V7H12zM3 9H6V12H3zM8 9H10V12H8zM12 9H14V12H12z'), swap: p('#c22', 'M3 7L9 3', 1.4) + p('#111', 'M7 13L13 9', 1.4), globe: f('#111', 'M3 4H12V14H3z') + '<circle cx="10" cy="6" r="4.500" fill="#2a8a90"/>' + p('#fff', 'M6 6H14M10 2V10', .8)
  };
  const right = [
    p('#777', 'M2 14H14') + p('#a33', 'M4 12L13 3', 1.7), p('#446', 'M2 3H7V6H2z') + p('#39c', 'M6 8H12V13H6z', 1.6), f('#446', 'M7 3V13H2z') + f('#7ad', 'M9 3V13H14z'), p('#258', 'M3 13Q1 9 5 8Q5 3 10 4Q14 5 13 8Q15 10 14 13z', 1.6),
    p('#111', 'M8 2V14M2 8H14M6 4L8 2L10 4M6 12L8 14L10 12M4 6L2 8L4 10M12 6L14 8L12 10'), '<circle cx="8" cy="9" r="5" stroke="#555"/>' + p('#111', 'M8 2V5'), p('#38c', 'M2 2H14V14H2z', 1.5) + p('#333', 'M2 8H8V14'), p('#333', 'M2 2H10L14 14H2z') + f('#222', 'M5 7L9 9L5 11z'),
    p('#39c', 'M2 13L14 3') + p('#333', 'M8 6V10'), p('#888', 'M2 9H8') + p('#39c', 'M8 13L14 3'), p('#333', 'M14 3H3V13H14') + f('#333', 'M12 1L15 3L12 5z'), p('#333', 'M2 5V14H14V5M4 3H7M9 3H12', 1.2), p('#39c', 'M1 8H15') + f('#111', 'M5 5V11L8 8zM11 5V11L8 8z'),
    p('#333', 'M2 14V8L8 2H14V14z'), p('#333', 'M2 14V7Q2 2 8 2H14V14z'), f('#58c', 'M2 6L6 3H14V11L10 14H2z') + p('#fff', 'M6 3V14M2 8H14', .8), p('#333', 'M2 3H13V9H2zM2 12H9') + f('#333', 'M10 11L14 14V10z'), p('#333', 'M2 3H13V13H2zM7 3V13') + f('#333', 'M10 10L15 15V9z'), p('#555', 'M4 2H12V13H4zM6 4H10') + f('#8ab', 'M5 5H11V9H5z'), p('#333', 'M2 2H10V10H2zM5 5H13V13H5z') + f('#39c', 'M10 10L15 14H9z'), p('#444', 'M2 14L7 2M6 14L11 2M10 14L15 2', 1.3)
  ];
  const bottom = [
    f('#9bd', 'M2 2H14V14H2z') + p('#46a', 'M2 2H14V14H2zM5 5H11M5 8H11M5 11H9'), p('#36a', 'M2 2H14V14H2zM5 2V6H11V2', 1.6), p('#556', 'M2 6A3 3 0 1 0 8 6A3 3 0 1 0 2 6M8 11A3 3 0 1 0 14 11A3 3 0 1 0 8 11'), p('#333', 'M3 3H9M3 6H9M3 9H6M3 12H6') + f('#396', 'M9 8L14 11L9 14z'), p('#777', 'M3 14L9 3L13 14z') + f('#b44', 'M7 9H12V14H7z'), 'sep',
    '<circle cx="8" cy="8" r="6" fill="#1fa44a"/>' + p('#fff', 'M5 5L11 11M11 5L5 11'), f('#175', 'M2 2H7V7H2zM9 2H14V7H9zM2 9H7V14H2zM9 9H14V14H9z') + dot(4.5, 4.5, '#fff', 1) + dot(11.5, 11.5, '#fff', 1), f('#cb2', 'M3 8H9V14H3z') + f('#185', 'M7 2H13V8H7z'), dot(4, 12, '#185', 1.5) + dot(8, 8, '#185', 1.5) + dot(12, 4, '#24c', 1.5), p('#185', 'M3 12Q5 4 13 4', 2) + dot(3, 12, '#c22', 1.8),
    p('#185', 'M4 3H12M8 3V13M4 13H12', 1.3), p('#185', 'M2 3H14M5 3V13M11 3V13M2 13H14', 1.2), p('#185', 'M4 3L8 8L4 13M12 3L8 8L12 13', 1.3), p('#175', 'M2 14H14M8 2V14M4 5H12M4 9H12', 1.4), p('#444', 'M2 13H14M3 12L12 3', 1.2) + p('#185', 'M6 13L9 7'), p('#185', 'M2 14L11 5') + dot(12, 4, '#27c', 2),
    p('#36a', 'M3 8H13M5 6L3 8L5 10M11 6L13 8L11 10', 1), p('#333', 'M2 2H14V14H2z', 1).replace('/>', ' stroke-dasharray="2 2"/>'), p('#333', 'M3 13L12 4') + dot(3, 13, '#185', 1.6) + dot(12, 4, '#333', 1.4), f('#c22', 'M2 14L7 7L9 10H14V14z') + dot(9, 4, '#185', 2), p('#b60', 'M3 13L13 3', 1.4) + f('#185', 'M6 6H10V10H6z'), f('#8c2', 'M2 8L6 12L14 2L8 14z') + dot(12, 3, '#e83', 1.5),
    p('#777', 'M2 6H14M2 10H14', 1.4), p('#185', 'M4 2H12V14H4zM4 6H12M4 10H12M8 2V14', 1.3), p('#a33', 'M8 2L6 6L10 9L7 14', 1), p('#1a9', 'M6 2V14M2 5H6M2 11H6M6 8H14M10 5H14', 1.2), p('#333', 'M3 3H13V13H3zM8 3V13', 1.4) + f('#c33', 'M3 3H6V6H3z'), p('#333', 'M3 6A4 4 0 1 1 7 10H5V14') + dot(12, 3, '#c93', 1.5), p('#222', 'M4 8H12M8 2V14M5 5H11', 1.6), p('#99a', 'M2 3H13V14H2zM7 3V14'), f('#45a', 'M2 8H9V14H2z') + f('#e83', 'M8 2H14V7H8z'), p('#333', 'M2 3H12V13H2z') + f('#9bd', 'M7 8H14V14H7z'), p('#74a', 'M2 13L8 4M8 13L14 4', 1.6) + dot(13, 4, '#d55', 1.3), p('#595', 'M2 2H12V13H2zM2 6H12', 1.3) + f('#c55', 'M8 8H14V14H8z'), f('#ad8', 'M3 4H10V12H3z') + p('#333', 'M3 4H10V12H3z') + f('#d63', 'M11 6L15 9L11 12z'),
    f('#fc5', 'M2 4H11V14H2z') + p('#996', 'M2 4H11V14H2z') + f('#5a5', 'M10 2H15V8H10z'), f('#125a9a', 'M5 6H11V14H5z') + p('#125a9a', 'M6 6V3Q8 1 10 3V6'), f('#7a5a10', 'M3 7H10V14H3z') + p('#222', 'M5 7V4Q7 1 10 3V4'), p('#345', 'M2 6L7 3H14V10L9 13H2zM7 3V6L2 6M7 6H14M9 6V13'), p('#345', 'M8 1L14 5V11L8 15L2 11V5z') + f('#7cc', 'M8 4L11 8L8 12L5 8z')
  ];
  const stA = [p('#38c', 'M2 13L12 3M2 13H14'), p('#36a', 'M3 3H13V13H3z', 1.5) + f('#36a', 'M3 3H7V6H3z'), 'c', p('#444', 'M2 4H14M2 8H10M2 12H14', 1.4), f('#6ab', 'M2 2H14V14H2z') + p('#fff', 'M2 6H14M2 10H14M6 2V14M10 2V14', .5), f('#7a7', 'M5 6H11V14H5z') + p('#a44', 'M3 2L7 6'), p('#556', 'M8 2L14 5V11L8 14L2 11V5zM2 5L8 8L14 5M8 8V14') + dot(13, 4, '#4a4', 2), 'c', p('#38c', 'M2 2V14H14', 1.4) + p('#d70', 'M4 12L12 3', 1.6), p('#aab', 'M8 2L14 5V11L8 14L2 11V5zM2 5L8 8L14 5M8 8V14'), 'c', p('#555', 'M8 2L3 12H13z') + '<circle cx="8" cy="10" r="4" stroke="#555"/>' + dot(12, 13, '#d44', 1.5), 'c', p('#17b', 'M8 2V8M3 14L8 8L13 14M3 6L13 6', 2), p('#555', 'M8 2V8M3 14L8 8L13 14M3 6L13 6', 1.5) + dot(13, 3, '#da3', 1.4), p('#444', 'M8 2V8M3 14L8 8L13 14', 2)];
  const stB = [p('#555', 'M5 3H11V6L14 8L11 10V13H5V10L2 8L5 6z', 1.8), 'c', p('#555', 'M8 2V14M2 8H14', 1.2), p('#777', 'M8 2V14', 2.5)];
  const stC = [p('#aaa', 'M4 3H12V13H4z', 1.4), p('#555', 'M2 2H14V10H2zM8 10V14M5 14H11') + f('#333', 'M9 9H14V14H9z'), 'c', '<circle cx="5" cy="5" r="3" stroke="#556"/>' + p('#556', 'M10 3H14V7H10zM4 10H8V14H4z'), 'hl', '<circle cx="8" cy="8" r="6.500" fill="#1b5ea6"/>' + p('#8bd', 'M5 10L11 5'), f('#ffe', 'M3 2H12V14H3z') + p('#336', 'M3 2H12V14H3zM5 5H10M5 8H10') + f('#3a3', 'M9 10L15 13L9 15z'), p('#333', 'M2 3H14V13H2z') + f('#555', 'M8 8H13V12H8z'), p('#444', 'M2 4H14M2 8H14M2 12H14', 1.4)];

  document.querySelectorAll('svg[data-i]').forEach(s => {
    s.setAttribute('viewBox', '0 0 16 16');
    s.innerHTML = icons[s.dataset.i] || '';
  });
  const svg = (inner, cls) => `<svg class="ic ${cls || ''}" viewBox="0 0 16 16">${inner}</svg>`;
  const fill = (id, list) => {
    document.getElementById(id).insertAdjacentHTML('beforeend', list.map(x =>
      x === 'c' ? '<span class="caret-dn"></span>' :
      x === 'sep' ? '<span class="p-bar-sep"></span>' :
      x === 'hl' ? svg(p('#38c', 'M3 3H10V10H3zM6 6H13V13H6z'), 'st-hl') : svg(x)).join(''));
  };
  fill('rBar', right); fill('tbBottom', bottom); fill('stA', stA); fill('stB', stB); fill('stC', stC);

  // block thumbnails, 26 x 30
  const fr = '<path d="M3 4H23V26H3z" stroke="#aaa" stroke-width="1.200"/>';
  const bd = (x, y) => `<circle cx="${x}" cy="${y}" r="1.500" fill="#fff"/>`;
  const yy = 'M6 8L13 16L20 8M13 16V25', yx = 'M6 7L13 14L20 7M13 14V24M7 19H19';
  const blocks = [
    fr + `<path d="${yy}"/>`, '<path d="M3 23L9 8H17L23 23zM9 23L12 8M17 23L14 8M5 17H21"/>', fr + '<path d="M5 8L11 15V25M17 8L11 15"/><circle cx="17" cy="20" r="4"/><circle cx="17" cy="20" r="1.800"/>', fr + `<path d="${yx}"/>`,
    '<path d="M5 9H22V21H5z" stroke="#eee" stroke-width="2"/><text x="13.500" y="17.500" fill="#ddd" stroke="none" font-size="6" text-anchor="middle" font-family="Liberation Sans">I/0</text>', '<path d="M3 9H23V21H3z" stroke-width="1.500"/><path d="M13 13V17"/>',
    fr + '<path d="M13 5V21"/>' + bd(13, 22), fr + '<path d="M9 6L18 14L9 19L17 26"/>', fr + '<path d="M6 24L13 8L20 24"/>', fr + '<path d="M22 6L8 15L22 22M8 15L22 11"/><circle cx="6" cy="14" r="2"/><circle cx="6" cy="20" r="2"/>',
    fr + '<path d="M5 5L11 12L5 18L11 25M17 4V21"/>' + bd(17, 22), fr + '<path d="M5 24L8 6L12 24M18 4V21"/>' + bd(18, 22),
    fr + '<path d="M13 4V26M4 24L7 8L11 24M15 7L22 15L15 20L22 25"/>', fr + '<path d="M3 15H23M13 4V22"/>' + bd(13, 22), fr + '<path d="M9 8H17M13 8V22"/>' + bd(13, 22), fr + '<path d="M3 15H23M9 8H17M13 8V22"/>' + bd(13, 22),
    fr + '<path d="M9 6L18 14L9 19L17 26"/>' + bd(20, 24), fr + '<path d="M13 7L6 20H20z"/><path d="M5 24H21" stroke-width="1.500"/>',
    fr + '<path d="M3 7H23M13 7L5 25M13 7L21 25"/>', fr + '<path d="M13 6L9 13L17 18L13 25"/>' + bd(8, 17) + bd(20, 14), fr + '<path d="M5 8L11 15V25M17 8L11 15"/><circle cx="17" cy="20" r="4"/><circle cx="17" cy="20" r="1.800"/>', fr + '<path d="M5 24V13Q5 6 13 6T21 13V24M3 24H23M8 24V14Q13 8 18 14V24"/>',
    fr + `<path d="${yx}"/>`, fr + `<path d="${yy}"/>`
  ];
  document.getElementById('blocks').innerHTML = blocks.map((b, i) =>
    `<div class="blk ${i === 4 ? 'blk-on' : ''}"><svg viewBox="0 0 26 30">${b}</svg></div>`).join('');
</script>
</body>
</html>
